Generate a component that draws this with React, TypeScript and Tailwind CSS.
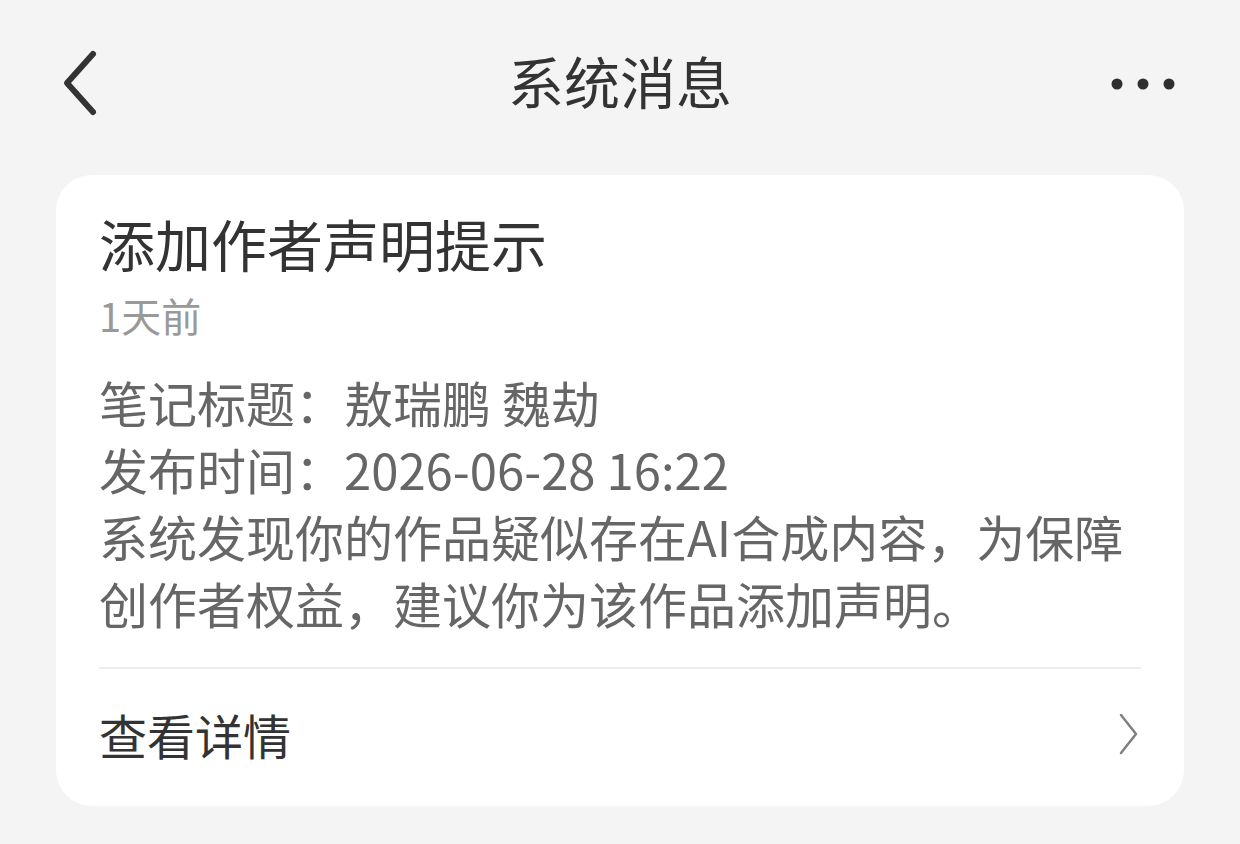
import React from 'react';

const font = { fontFamily: '"Noto Sans CJK SC", "Noto Sans", sans-serif' };

const BackIcon = () => (
	<svg width="40" height="70" viewBox="0 0 40 70" fill="none">
		<path d="M33 5 L7 34 L33 63" stroke="#333333" strokeWidth="6" strokeLinecap="round" strokeLinejoin="round" />
	</svg>
);

const MoreIcon = () => (
	<svg width="70" height="20" viewBox="0 0 70 20">
		<circle cx="9" cy="10" r="5.5" fill="#2f2f2f" />
		<circle cx="35" cy="10" r="5.5" fill="#2f2f2f" />
		<circle cx="61" cy="10" r="5.5" fill="#2f2f2f" />
	</svg>
);

const ChevronRight = () => (
	<svg width="24" height="44" viewBox="0 0 24 44" fill="none">
		<path d="M4 3 L19 22 L4 41" stroke="#808080" strokeWidth="2.5" strokeLinecap="round" strokeLinejoin="round" />
	</svg>
);

export default function App() {
	return (
		<div className="w-[1240px] h-[844px] bg-[#f4f4f4] overflow-hidden" style={font}>
			{/* 顶部导航 */}
			<div className="h-[175px] pt-[49px]">
				<div className="h-[70px] grid grid-cols-[1fr_auto_1fr] items-center pl-[60px] pr-[62px]">
					<div className="justify-self-start h-[70px]">
						<BackIcon />
					</div>
					<div className="text-[56px] leading-[56px] text-[#333333] pb-[8px] pl-[2px]">系统消息</div>
					<div className="justify-self-end h-[20px]">
						<MoreIcon />
					</div>
				</div>
			</div>

			{/* 消息卡片 */}
			<div className="mx-[56px] w-[1128px] bg-white rounded-[36px] px-[43px] pt-[32px]">
				<div className="text-[56px] leading-[72px] text-[#333333]">添加作者声明提示</div>
				<div className="mt-[8px] text-[40px] leading-[56px] text-[#999999]">1天前</div>
				<div className="mt-[25px] text-[49px] leading-[67px] text-[#666666]">
					<div>笔记标题：敖瑞鹏 魏劫</div>
					<div>发布时间：2026-06-28 16:22</div>
					<div>系统发现你的作品疑似存在AI合成内容，为保障创作者权益，建议你为该作品添加声明。</div>
				</div>
				<div className="mt-[31px] h-[2px] bg-[#ececec]" />
				<div className="h-[137px] flex items-center justify-between pb-[7px]">
					<span className="text-[48px] text-[#333333]">查看详情</span>
					<ChevronRight />
				</div>
			</div>
		</div>
	);
}
